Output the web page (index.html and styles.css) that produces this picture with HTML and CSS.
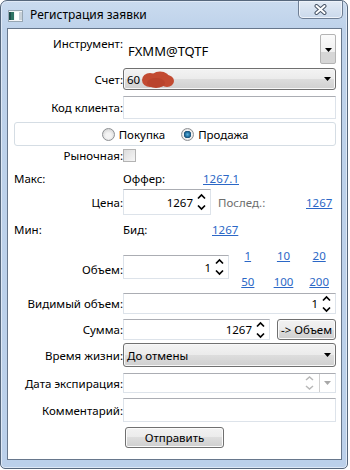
FILE: index.html
```html
<!DOCTYPE html>
<html lang="ru">
<head>
  <meta charset="UTF-8" />
  <title>Регистрация заявки</title>
  <link rel="stylesheet" href="styles.css">
</head>
<body>
  <div class="window">
    <div class="titlebar">
      <svg class="app-icon" width="15" height="12" viewBox="0 0 15 12">
        <rect x="0.5" y="0.5" width="14" height="11" fill="#f3f5f7" stroke="#97a6b3"/>
        <rect x="1" y="2" width="5" height="8" fill="#2f7364"/>
        <rect x="1" y="2" width="2" height="8" fill="#1e4f4c"/>
        <rect x="7" y="2" width="4" height="8" fill="#ffffff"/>
        <rect x="11" y="2" width="3" height="8" fill="#c9d2da"/>
      </svg>
      <span class="title">Регистрация заявки</span>
      <div class="close-btn">
        <svg width="13" height="11" viewBox="0 0 13 11">
          <path d="M2.5 2 L10.5 9 M10.5 2 L2.5 9" stroke="#4a5668" stroke-width="4" stroke-linecap="round"/>
          <path d="M2.5 2 L10.5 9 M10.5 2 L2.5 9" stroke="#ffffff" stroke-width="2" stroke-linecap="round"/>
        </svg>
      </div>
    </div>

    <div class="client">
      <div class="row row-instr">
        <span class="lbl lbl-top">Инструмент:</span>
        <span class="instr-value">FXMM@TQTF</span>
        <span class="drop-btn">
          <svg width="7" height="4" viewBox="0 0 7 4"><path d="M0 0 H7 L3.5 4 Z" fill="#000"/></svg>
        </span>
      </div>

      <div class="row row-account">
        <span class="lbl">Счет:</span>
        <div class="combo">
          <span class="combo-text">60<svg class="blot" width="34" height="18" viewBox="0 0 34 18">
            <ellipse cx="9" cy="9" rx="8" ry="7" fill="#c24a31"/>
            <ellipse cx="19" cy="8" rx="10" ry="7.5" fill="#c24a31"/>
            <ellipse cx="26" cy="10" rx="7" ry="6" fill="#c24a31"/>
            <ellipse cx="15" cy="12" rx="9" ry="5" fill="#b9432c"/>
          </svg></span>
          <svg class="combo-arrow" width="7" height="4" viewBox="0 0 7 4"><path d="M0 0 H7 L3.5 4 Z" fill="#000"/></svg>
        </div>
      </div>

      <div class="row row-client">
        <span class="lbl">Код клиента:</span>
        <div class="textbox"></div>
      </div>

      <div class="radio-group">
        <span class="radio-item"><span class="radio"></span>Покупка</span>
        <span class="radio-item"><span class="radio checked"></span>Продажа</span>
      </div>

      <div class="row row-market">
        <span class="lbl">Рыночная:</span>
        <span class="checkbox"></span>
      </div>

      <div class="row row-max">
        <span class="side-lbl">Макс:</span>
        <span class="quote-lbl quote-offer">Оффер:</span>
        <a class="link" href="#">1267.1</a>
      </div>

      <div class="row row-price">
        <span class="lbl">Цена:</span>
        <div class="spin spin-price">
          <span class="spin-value">1267</span>
          <svg class="spin-arrows" width="9" height="18" viewBox="0 0 9 18">
            <polyline points="1,5.5 4.5,2 8,5.5" fill="none" stroke="#000" stroke-width="1.7"/>
            <polyline points="1,12.5 4.5,16 8,12.5" fill="none" stroke="#000" stroke-width="1.7"/>
          </svg>
        </div>
        <span class="last-lbl">Послед.:</span>
        <a class="link" href="#">1267</a>
      </div>

      <div class="row row-min">
        <span class="side-lbl">Мин:</span>
        <span class="quote-lbl quote-bid">Бид:</span>
        <a class="link" href="#">1267</a>
      </div>

      <div class="row row-volume">
        <span class="lbl">Объем:</span>
        <div class="spin spin-volume">
          <span class="spin-value">1</span>
          <svg class="spin-arrows" width="9" height="18" viewBox="0 0 9 18">
            <polyline points="1,5.5 4.5,2 8,5.5" fill="none" stroke="#000" stroke-width="1.7"/>
            <polyline points="1,12.5 4.5,16 8,12.5" fill="none" stroke="#000" stroke-width="1.7"/>
          </svg>
        </div>
        <div class="quick-volumes">
          <a class="link" href="#">1</a>
          <a class="link" href="#">10</a>
          <a class="link" href="#">20</a>
          <a class="link" href="#">50</a>
          <a class="link" href="#">100</a>
          <a class="link" href="#">200</a>
        </div>
      </div>

      <div class="row row-visible">
        <span class="lbl">Видимый объем:</span>
        <div class="spin spin-wide">
          <span class="spin-value">1</span>
          <svg class="spin-arrows" width="9" height="18" viewBox="0 0 9 18">
            <polyline points="1,5.5 4.5,2 8,5.5" fill="none" stroke="#000" stroke-width="1.7"/>
            <polyline points="1,12.5 4.5,16 8,12.5" fill="none" stroke="#000" stroke-width="1.7"/>
          </svg>
        </div>
      </div>

      <div class="row row-sum">
        <span class="lbl">Сумма:</span>
        <div class="spin spin-sum">
          <span class="spin-value">1267</span>
          <svg class="spin-arrows" width="9" height="18" viewBox="0 0 9 18">
            <polyline points="1,5.5 4.5,2 8,5.5" fill="none" stroke="#000" stroke-width="1.7"/>
            <polyline points="1,12.5 4.5,16 8,12.5" fill="none" stroke="#000" stroke-width="1.7"/>
          </svg>
        </div>
        <button class="btn btn-to-volume">-&gt; Объем</button>
      </div>

      <div class="row row-life">
        <span class="lbl">Время жизни:</span>
        <div class="combo">
          <span class="combo-text">До отмены</span>
          <svg class="combo-arrow" width="7" height="4" viewBox="0 0 7 4"><path d="M0 0 H7 L3.5 4 Z" fill="#000"/></svg>
        </div>
      </div>

      <div class="row row-expire">
        <span class="lbl">Дата экспирация:</span>
        <div class="date-box">
          <svg class="spin-arrows" width="9" height="16" viewBox="0 0 9 16">
            <polyline points="1,5 4.5,2 8,5" fill="none" stroke="#b8b8b8" stroke-width="1.5"/>
            <polyline points="1,11 4.5,14 8,11" fill="none" stroke="#b8b8b8" stroke-width="1.5"/>
          </svg>
          <span class="date-drop">
            <svg width="7" height="4" viewBox="0 0 7 4"><path d="M0 0 H7 L3.5 4 Z" fill="#a8a8a8"/></svg>
          </span>
        </div>
      </div>

      <div class="row row-comment">
        <span class="lbl">Комментарий:</span>
        <div class="textbox"></div>
      </div>

      <div class="row row-submit">
        <button class="btn btn-submit">Отправить</button>
      </div>
    </div>
  </div>
</body>
</html>
```

FILE: styles.css
```css
body {
  margin: 0;
  background: #fff;
  font-family: "Noto Sans", "Open Sans", sans-serif;
  font-size: 11.5px;
  color: #000;
}

.window {
  width: 348px;
  height: 469px;
  box-sizing: border-box;
  border: 1px solid #56677c;
  border-radius: 7px 7px 5px 5px;
  background: linear-gradient(#cadbef, #bed2ea 28px, #bbd0ea);
  box-shadow: inset 0 0 0 1px #dfe9f6;
  padding: 0 5px 8px 6px;
  display: flex;
  flex-direction: column;
}

.titlebar {
  height: 27px;
  display: flex;
  align-items: flex-start;
}

.app-icon {
  margin: 9px 0 0 1px;
  flex: none;
}

.title {
  margin: 6px 0 0 7px;
  font-size: 12px;
  line-height: 16px;
}

.close-btn {
  margin-left: auto;
  margin-right: -1px;
  width: 45px;
  height: 18px;
  box-sizing: border-box;
  border: 1px solid #6e7e94;
  border-top: none;
  border-radius: 0 0 5px 5px;
  background: linear-gradient(#e3ebf5, #cad9ec);
  box-shadow: inset 0 0 0 1px #eef3fa;
  display: flex;
  align-items: center;
  justify-content: center;
}

.client {
  flex: 1;
  border: 1px solid #67778c;
  background: #fff;
  padding-top: 5px;
  display: flex;
  flex-direction: column;
}

.row {
  display: flex;
  align-items: center;
  flex: none;
}

.lbl {
  width: 115px;
  flex: none;
  text-align: right;
  white-space: nowrap;
}

.link {
  color: #2b67c6;
  text-decoration: underline;
}

/* text fields */

.textbox,
.spin,
.date-box {
  box-sizing: border-box;
  height: 100%;
  border: 1px solid #dde3ea;
  border-top-color: #abadb3;
  background: #fff;
}

.textbox {
  width: 213px;
}

.spin {
  display: flex;
  align-items: center;
  justify-content: flex-end;
}

.spin-value {
  margin-right: 4px;
}

.spin-arrows {
  flex: none;
  margin-right: 4px;
}

/* combos */

.combo {
  width: 213px;
  height: 100%;
  box-sizing: border-box;
  border: 1px solid #707070;
  border-radius: 3px;
  background: linear-gradient(#f3f3f3, #ebebeb 50%, #dddddd 50%, #d0d0d0);
  box-shadow: inset 0 0 0 1px #f8f8f8;
  display: flex;
  align-items: center;
}

.combo-text {
  margin-left: 3px;
  display: flex;
  align-items: center;
  white-space: nowrap;
}

.blot {
  margin: 2px 0 0 1px;
}

.combo-arrow {
  margin-left: auto;
  margin-right: 4px;
}

.drop-btn {
  margin-left: auto;
  margin-right: 5px;
  width: 16px;
  height: 30px;
  box-sizing: border-box;
  border: 1px solid #b4b4b4;
  border-radius: 2px;
  background: linear-gradient(#fbfbfb, #f0f0f0 60%, #d6d6d6 60%, #d6d6d6);
  display: flex;
  justify-content: center;
  padding-top: 13px;
}

/* rows */

.row-instr {
  height: 30px;
  align-items: flex-start;
}

.row-instr .lbl-top {
  padding-top: 2px;
}

.instr-value {
  margin: 8px 0 0 5px;
  font-size: 13px;
}

.row-account {
  margin-top: 4px;
  height: 22px;
}

.row-client {
  margin-top: 6px;
  height: 23px;
}

.radio-group {
  margin: 3px 0 0 6px;
  width: 322px;
  height: 24px;
  box-sizing: border-box;
  border: 1px solid #d5dde4;
  border-radius: 3px;
  display: flex;
  align-items: center;
  justify-content: center;
  gap: 16px;
  flex: none;
}

.radio-item {
  display: flex;
  align-items: center;
  gap: 4px;
}

.radio {
  width: 13px;
  height: 13px;
  box-sizing: border-box;
  border-radius: 50%;
  border: 1px solid #8d9093;
  background: radial-gradient(circle at 50% 60%, #f4f4f4 30%, #c9c9c9 100%);
}

.radio.checked {
  background: radial-gradient(circle, #5db4e0 0, #1f6a99 2.5px, #1b4f74 3.5px, #f2f2f2 4px, #cacaca 100%);
}

.row-market {
  margin-top: 3px;
  height: 13px;
}

.checkbox {
  width: 13px;
  height: 13px;
  box-sizing: border-box;
  border: 1px solid #b3b3b3;
  background: linear-gradient(135deg, #dcdcdc, #f6f6f6);
}

.row-max {
  margin-top: 8px;
  height: 16px;
}

.side-lbl {
  margin-left: 6px;
  width: 109px;
  flex: none;
}

.quote-offer {
  width: 80px;
}

.quote-bid {
  width: 89px;
}

.row-price {
  margin-top: 3px;
  height: 26px;
}

.spin-price {
  width: 88px;
}

.last-lbl {
  margin-left: 7px;
  width: 88px;
  color: #6d6d6d;
}

.row-min {
  margin-top: 6px;
  height: 16px;
}

.row-volume {
  margin-top: 11px;
  height: 42px;
}

.spin-volume {
  width: 106px;
  height: 24px;
  align-self: flex-start;
  margin-top: 7px;
}

.quick-volumes {
  margin-left: 1px;
  width: 107px;
  display: grid;
  grid-template-columns: repeat(3, 1fr);
  grid-auto-rows: 16px;
  row-gap: 10px;
  text-align: center;
  align-self: stretch;
}

.row-visible {
  margin-top: 3px;
  height: 21px;
}

.spin-wide {
  width: 213px;
}

.row-sum {
  margin-top: 5px;
  height: 21px;
}

.spin-sum {
  width: 147px;
}

.btn {
  font-family: inherit;
  font-size: 11.5px;
  color: #000;
  height: 100%;
  padding: 0;
  box-sizing: border-box;
  border: 1px solid #707070;
  border-radius: 3px;
  background: linear-gradient(#f2f2f2, #ebebeb 50%, #dddddd 50%, #cfcfcf);
  box-shadow: inset 0 0 0 1px #fbfbfb;
}

.btn-to-volume {
  margin-left: 7px;
  width: 59px;
}

.row-life {
  margin-top: 3px;
  height: 24px;
}

.row-expire {
  margin-top: 6px;
  height: 20px;
}

.date-box {
  width: 213px;
  display: flex;
  align-items: center;
  justify-content: flex-end;
}

.date-box .spin-arrows {
  margin-right: 5px;
}

.date-drop {
  width: 16px;
  height: 100%;
  box-sizing: border-box;
  border-left: 1px solid #d0d0d0;
  display: flex;
  align-items: center;
  justify-content: center;
}

.row-comment {
  margin-top: 5px;
  height: 24px;
}

.row-submit {
  margin-top: 5px;
  height: 21px;
}

.btn-submit {
  margin-left: 117px;
  width: 99px;
}
```
